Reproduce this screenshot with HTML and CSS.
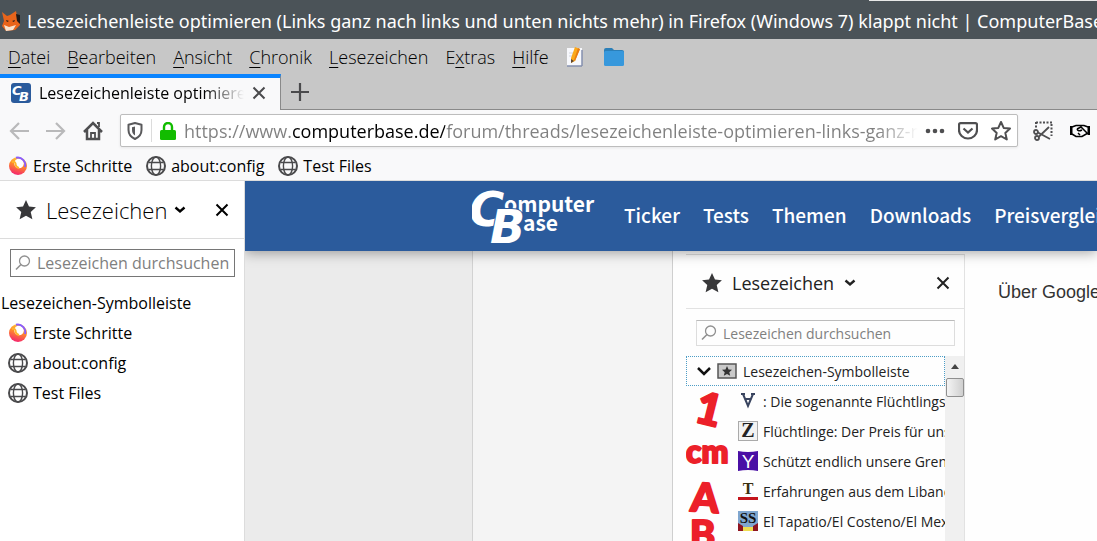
FILE: index.html
```html
<!DOCTYPE html>
<html lang="de">
<head>
    <meta charset="UTF-8">
    <meta name="viewport" content="width=device-width,initial-scale=1">
    <title>Lesezeichenleiste optimieren | ComputerBase</title>
    <link rel="stylesheet" href="styles.css">
</head>

<body>
<!-- shared icons -->
<svg class="defs" aria-hidden="true">
    <defs>
        <linearGradient id="fire" x1="0.7" y1="0" x2="0.4" y2="1">
            <stop offset="0" stop-color="#ffd23c"/>
            <stop offset="0.45" stop-color="#ff8a2a"/>
            <stop offset="1" stop-color="#f5246e"/>
        </linearGradient>
        <symbol id="globe" viewBox="0 0 20 20">
            <g fill="none" stroke="#4a4a4c" stroke-width="1.4">
                <circle cx="10" cy="10" r="9" stroke-width="2"/>
                <ellipse cx="10" cy="10" rx="4.6" ry="9"/>
                <path d="M2.5 6.5h15M2.5 13.5h15"/>
            </g>
        </symbol>
        <symbol id="firefox" viewBox="0 0 20 20">
            <circle cx="10" cy="10" r="9" fill="url(#fire)"/>
            <circle cx="11" cy="7.500" r="4.800" fill="#fff"/>
            <path d="M8 1.800A7.500 7.500 0 0 1 17 11" fill="none" stroke="#8a5cff" stroke-width="2"/>
            <path d="M4 6q3-1 3.500 1.500Q7.500 11 11 12" fill="none" stroke="#ffb52e" stroke-width="2"/>
        </symbol>
        <symbol id="star" viewBox="0 0 20 20">
            <path d="M10 1l2.700 5.900 6.300.7-4.700 4.300 1.500 6.600L10 15.200l-5.800 3.300 1.500-6.600L1 7.600l6.300-.7z" stroke-linejoin="round"/>
        </symbol>
        <symbol id="cross" viewBox="0 0 14 14">
            <path d="M1.500 1.500l11 11M12.500 1.500l-11 11" fill="none" stroke="currentColor" stroke-width="2"/>
        </symbol>
        <symbol id="chevron" viewBox="0 0 14 10">
            <path d="M2.500 2.500l4.500 4 4.500-4" fill="none" stroke="currentColor" stroke-width="2.400"/>
        </symbol>
        <symbol id="lens" viewBox="0 0 16 16">
            <circle cx="9.500" cy="6" r="5" fill="none" stroke="#909090" stroke-width="1.300"/>
            <path d="M6 9.500L1 14.500" stroke="#909090" stroke-width="1.600"/>
        </symbol>
    </defs>
</svg>

<div class="titlebar">
    <svg class="fox" viewBox="0 0 20 20">
        <path d="M1 1l5 4 3-1 6-4 1 5 3-1v10l-5 5-9 1-4-5 2-5z" fill="#e8641b"/>
        <path d="M3 14l5 2 7-2-3 5-7 1z" fill="#f6e3d0"/>
        <path d="M15 3l4 1v9l-3-3zM5 9l3 1-2 1zM11 10l3-1-1 2z" fill="#1e1a1a"/>
    </svg>
    <div class="title">Lesezeichenleiste optimieren (Links ganz nach links und unten nichts mehr) in Firefox (Windows 7) klappt nicht | ComputerBase</div>
</div>

<div class="menubar">
    <button><u>D</u>atei</button>
    <button><u>B</u>earbeiten</button>
    <button><u>A</u>nsicht</button>
    <button><u>C</u>hronik</button>
    <button><u>L</u>esezeichen</button>
    <button>E<u>x</u>tras</button>
    <button><u>H</u>ilfe</button>
    <button aria-label="Editor">
        <svg width="20" height="20" viewBox="0 0 20 20">
            <path d="M1 1h15v18H1z" fill="#f7f8fc"/>
            <path d="M1 19h15M16 3v16" stroke="#8590ae" stroke-width="1.500"/>
            <path d="M3 6h7M3 9h5" stroke="#d0d3de"/>
            <path d="M9 0l5 2-5 12-4 2v-5z" fill="#fba91a"/>
            <path d="M12 1l2 1-5 12-1-1z" fill="#e77b12"/>
            <path d="M5 12l3 2-3 2z" fill="#5a4636"/>
        </svg>
    </button>
    <button aria-label="Ordner">
        <svg width="22" height="20" viewBox="0 0 22 20">
            <path d="M1 3q0-2 2-2h6l2 2h8q2 0 2 2v4H1z" fill="#2b7fb8"/>
            <rect x="1" y="4" width="20" height="15" rx="1.500" fill="#3798dc"/>
        </svg>
    </button>
</div>

<div class="tabs">
    <div class="tab">
        <svg width="20" height="20" viewBox="0 0 20 20">
            <rect width="20" height="20" rx="3" fill="#2b5b9c"/>
            <text x="1" y="12" class="mark" font-size="13">C</text>
            <text x="8" y="18" class="mark" font-size="13">B</text>
        </svg>
        <span class="tab-label">Lesezeichenleiste optimieren</span>
        <button class="tab-close" aria-label="Tab schließen"><svg width="14" height="14"><use href="#cross"/></svg></button>
    </div>
    <button class="new-tab" aria-label="Neuer Tab">
        <svg width="18" height="18" viewBox="0 0 18 18"><path d="M9 0v18M0 9h18" stroke="#4a4a4c" stroke-width="2.200"/></svg>
    </button>
</div>

<div class="toolbar">
    <button class="tool off" aria-label="Zurück">
        <svg width="20" height="20" viewBox="0 0 20 20"><path d="M20 10H2M10 2L2 10l8 8" fill="none" stroke="currentColor" stroke-width="2.200"/></svg>
    </button>
    <button class="tool off" aria-label="Vor">
        <svg width="20" height="20" viewBox="0 0 20 20"><path d="M0 10h18M10 2l8 8-8 8" fill="none" stroke="currentColor" stroke-width="2.200"/></svg>
    </button>
    <button class="tool" aria-label="Startseite">
        <svg width="20" height="20" viewBox="0 0 20 20">
            <path d="M1 11l9-9 9 9M4 9v9h12V9" fill="none" stroke="currentColor" stroke-width="2.500"/>
            <path d="M8 18v-6h4v6M14 2h2v4" fill="none" stroke="currentColor" stroke-width="1.800"/>
        </svg>
    </button>
    <div class="urlbar">
        <svg width="16" height="18" viewBox="0 0 16 18">
            <path d="M8 1L1.500 2.800V8q0 6 6.500 9 6.500-3 6.500-9V2.800z" fill="none" stroke="#5a5a5c" stroke-width="2" stroke-linejoin="round"/>
            <path d="M8 4.500L5 5.300V8q0 3.500 3 5.500z" fill="#5a5a5c"/>
        </svg>
        <span class="sep"></span>
        <svg width="16" height="18" viewBox="0 0 16 18">
            <path d="M4 9V5a4 4 0 0 1 8 0v4" fill="none" stroke="#12bc00" stroke-width="2.400"/>
            <rect y="8" width="16" height="10" rx="1.500" fill="#12bc00"/>
        </svg>
        <input class="url" type="text" aria-label="Adresse" value="https://www.computerbase.de/forum/threads/lesezeichenleiste-optimieren-links-ganz-nach-links">
        <button class="tool" aria-label="Aktionen">
            <svg width="20" height="6" viewBox="0 0 20 6"><g fill="currentColor"><circle cx="3" cy="3" r="2.300"/><circle cx="10" cy="3" r="2.300"/><circle cx="17" cy="3" r="2.300"/></g></svg>
        </button>
        <button class="tool" aria-label="Pocket">
            <svg width="20" height="18" viewBox="0 0 20 18"><path d="M2.500 1.200h15q1.500 0 1.500 1.500V8a9 8.500 0 0 1-18 0V2.700q0-1.500 1.500-1.500zM5.500 6.500l4.500 4 4.500-4" fill="none" stroke="currentColor" stroke-width="2.200"/></svg>
        </button>
        <button class="tool" aria-label="Lesezeichen setzen">
            <svg width="20" height="20" fill="none" stroke="currentColor" stroke-width="2"><use href="#star"/></svg>
        </button>
    </div>
    <button class="tool" aria-label="Bildschirmfoto">
        <svg width="20" height="20" viewBox="0 0 20 20">
            <path d="M3 1.500h17M18.500 3v12M3 1v6" fill="none" stroke="currentColor" stroke-width="2" stroke-dasharray="2 1.500"/>
            <g fill="none" stroke="currentColor" stroke-width="1.800"><circle cx="3" cy="11" r="2"/><circle cx="4" cy="17" r="2"/><path d="M5 11.500l12 6.500M5.500 16L16 6"/></g>
        </svg>
    </button>
    <button class="tool dark" aria-label="Handschlag">
        <svg width="20" height="14" viewBox="0 0 20 14">
            <path d="M0 2h2.500v9H0zM17.500 2H20v9h-2.500z" fill="currentColor"/>
            <path d="M2 3l4-1.500h8L18 3M2 10l4 2.500h6L18 9M7 5l4-2 6 6M7 5q1 3 5 1M8 9l2 2" fill="none" stroke="currentColor" stroke-width="1.500"/>
        </svg>
    </button>
</div>

<div class="bookmarks">
    <a href="#"><svg width="20" height="20"><use href="#firefox"/></svg>Erste Schritte</a>
    <a href="#"><svg width="20" height="20"><use href="#globe"/></svg>about:config</a>
    <a href="#"><svg width="20" height="20"><use href="#globe"/></svg>Test Files</a>
</div>

<div class="content">
    <aside class="sidebar">
        <div class="side-head">
            <svg class="star" width="22" height="22"><use href="#star"/></svg>
            <button class="side-title">Lesezeichen<svg width="14" height="10"><use href="#chevron"/></svg></button>
            <button class="side-close" aria-label="Sidebar schließen"><svg width="14" height="14"><use href="#cross"/></svg></button>
        </div>
        <label class="search">
            <svg width="16" height="16"><use href="#lens"/></svg>
            <input type="text" aria-label="Lesezeichen durchsuchen" placeholder="Lesezeichen durchsuchen">
        </label>
        <div class="tree">
            <div class="folder">Lesezeichen-Symbolleiste</div>
            <a href="#"><svg width="20" height="20"><use href="#firefox"/></svg>Erste Schritte</a>
            <a href="#"><svg width="20" height="20"><use href="#globe"/></svg>about:config</a>
            <a href="#"><svg width="20" height="20"><use href="#globe"/></svg>Test Files</a>
        </div>
    </aside>

    <div class="page">
        <header class="site-head">
            <a class="logo" href="#" aria-label="ComputerBase">
                <svg width="124" height="56" viewBox="0 0 124 56">
                    <text x="32" y="24" class="word">omputer</text>
                    <text x="51" y="43" class="word">ase</text>
                    <text x="-3" y="38" class="mark edge" font-size="48">C</text>
                    <text x="18" y="55" class="mark edge" font-size="46">B</text>
                </svg>
            </a>
            <nav>
                <a href="#">Ticker</a>
                <a href="#">Tests</a>
                <a href="#">Themen</a>
                <a href="#">Downloads</a>
                <a href="#">Preisvergleich</a>
            </nav>
        </header>
        <main class="thread">
            <div class="user"></div>
            <article class="post">
                <div class="shot">
                    <div class="shot-head">
                        <svg class="star" width="22" height="22"><use href="#star"/></svg>
                        <span>Lesezeichen</span>
                        <svg width="14" height="10"><use href="#chevron"/></svg>
                        <svg class="shot-close" width="14" height="14"><use href="#cross"/></svg>
                    </div>
                    <label class="search pale">
                        <svg width="16" height="16"><use href="#lens"/></svg>
                        <input type="text" aria-label="Suche" placeholder="Lesezeichen durchsuchen">
                    </label>
                    <div class="shot-body">
                        <div class="shot-list">
                            <div class="shot-folder">
                                <svg width="14" height="10" viewBox="0 0 14 10"><path d="M1 2l6 6 6-6" fill="none" stroke="#111" stroke-width="2.500"/></svg>
                                <svg width="20" height="16" viewBox="0 0 20 16">
                                    <rect x="1" y="1" width="18" height="14" fill="#c9c9c9" stroke="#555" stroke-width="1.500"/>
                                    <path d="M10 3l1.500 3.500 3.500.3-2.700 2.400.9 3.600L10 11l-3.200 1.800.9-3.600L5 6.800l3.500-.3z" fill="#333"/>
                                </svg>
                                Lesezeichen-Symbolleiste
                            </div>
                            <div class="rows">
                                <svg class="scrawl" width="44" height="170" viewBox="0 0 44 170">
                                    <text x="10" y="38" font-size="44" transform="rotate(14 20 24)">1</text>
                                    <text x="0" y="77" font-size="32">cm</text>
                                    <text x="5" y="126" font-size="40" transform="rotate(4 18 110)">A</text>
                                    <text x="4" y="162" font-size="38">B</text>
                                </svg>
                                <ul>
                                    <li><svg width="20" height="20" viewBox="0 0 20 20"><path d="M3 3h4M13 3h4M5 3l5 12 5-12M7 8h6" fill="none" stroke="#39445f" stroke-width="2"/></svg>: Die sogenannte Flüchtlingskrise</li>
                                    <li><svg width="20" height="20" viewBox="0 0 20 20"><rect x="0.500" y="0.500" width="19" height="19" fill="#f3f3f3" stroke="#aaa"/><text x="10" y="16" class="fav" fill="#222" font-size="20">Z</text></svg>Flüchtlinge: Der Preis für unsere</li>
                                    <li><svg width="20" height="20" viewBox="0 0 20 20"><path d="M0 0q10 2 20 0v20q-10-2-20 0z" fill="#4a0fa5"/><text x="10" y="17" class="fav sans" fill="#fff" font-size="19">Y</text></svg>Schützt endlich unsere Grenzen</li>
                                    <li><svg width="20" height="20" viewBox="0 0 20 20"><text x="10" y="13" class="fav" fill="#3a3010" font-size="16">T</text><path d="M0 16h20v3H0z" fill="#c4151c"/></svg>Erfahrungen aus dem Libanon</li>
                                    <li><svg width="20" height="20" viewBox="0 0 20 20"><path d="M0 0h20v20H0z" fill="#7fa6cf"/><path d="M0 12l5 3v5H0zM20 12l-5 3v5h5z" fill="#8f1420"/><path d="M5 16h10v4H5z" fill="#eedc50"/><text x="10" y="12" class="fav" fill="#111" font-size="15">SS</text></svg>El Tapatio/El Costeno/El Mexicano</li>
                                </ul>
                            </div>
                        </div>
                        <div class="scroll">
                            <svg width="10" height="6" viewBox="0 0 10 6"><path d="M5 0l4 5H1z" fill="#444"/></svg>
                            <span class="thumb"></span>
                        </div>
                    </div>
                </div>
                <p>Über Google</p>
            </article>
        </main>
    </div>
</div>
</body>
</html>
```
FILE: styles.css
```css
* {
    box-sizing: border-box;
}

body {
    margin: 0;
    height: 100vh;
    overflow: hidden;
    display: flex;
    flex-direction: column;
    font-family: "Open Sans", "Noto Sans", sans-serif;
    font-size: 16px;
    color: #000;
    background: #f9f9fa;
}

button {
    border: 0;
    padding: 0;
    background: none;
    font: inherit;
    color: inherit;
}

a {
    color: inherit;
    text-decoration: none;
}

svg {
    flex: none;
    display: block;
}

.defs {
    position: absolute;
    width: 0;
    height: 0;
}

.mark {
    font-family: "DejaVu Sans", sans-serif;
    font-weight: 700;
    font-style: italic;
    fill: #fff;
}

/* window frame */
.titlebar {
    flex: none;
    height: 39px;
    display: flex;
    align-items: center;
    gap: 6px;
    padding: 2px 0 0 1px;
    background: linear-gradient(#e8e8e8, #e8e8e8) 100% 0 / 228px 1px no-repeat #4b5358;
    color: #fff;
    font-family: "Noto Sans", sans-serif;
    font-size: 18px;
    font-weight: 400;
    white-space: nowrap;
    overflow: hidden;
}

.fox {
    width: 20px;
    height: 20px;
}

.menubar {
    flex: none;
    height: 35px;
    display: flex;
    align-items: center;
    gap: 17px;
    padding: 0 8px;
    background: #c7c7c7;
    font-size: 18px;
    font-weight: 300;
}

.menubar u {
    text-underline-offset: 3px;
    text-decoration-thickness: 1px;
}

.tabs {
    flex: none;
    height: 36px;
    display: flex;
    background: linear-gradient(#898989, #898989) 0 100% / 100% 1px no-repeat #c7c7c7;
}

.tab {
    width: 281px;
    display: flex;
    align-items: center;
    gap: 8px;
    padding: 0 14px 2px 11px;
    background: #f9f9fa;
    border-top: 4px solid #0a84ff;
    border-right: 1px solid #898989;
}

.tab-label {
    flex: 1;
    white-space: nowrap;
    overflow: hidden;
    mask-image: linear-gradient(to left, transparent, #000 40px);
}

.tab-close {
    color: #4a4a4c;
}

.new-tab {
    padding: 0 10px;
}

.toolbar {
    flex: none;
    height: 41px;
    display: flex;
    align-items: center;
    gap: 17px;
    padding: 0 7px 0 9px;
}

.tool {
    color: #4f4f51;
}

.off {
    color: #b9b9ba;
}

.dark {
    color: #000;
}

.urlbar {
    flex: 1;
    height: 33px;
    display: flex;
    align-items: center;
    gap: 13px;
    padding: 0 6px;
    margin-right: -2px;
    background: #fff;
    border: 1px solid #bdbdbd;
    border-radius: 2px;
    box-shadow: 0 1px 3px rgba(0, 0, 0, .08);
}

.sep {
    width: 1px;
    height: 23px;
    background: #dcdcdc;
    margin: 0 -5px;
}

.url {
    flex: 1;
    min-width: 0;
    height: 31px;
    border: 0;
    padding: 0;
    margin: 0 -6px 0 -5px;
    outline: 0;
    font: inherit;
    font-size: 18px;
    color: #808080;
    /* domain is dark, the rest of the address grey */
    background: linear-gradient(to right, #808080 108px, #000 108px, #000 261px, #808080 261px);
    background-clip: text;
    -webkit-background-clip: text;
    -webkit-text-fill-color: transparent;
    mask-image: linear-gradient(to left, transparent, #000 40px);
}

.bookmarks {
    flex: none;
    height: 30px;
    display: flex;
    align-items: center;
    gap: 14px;
    padding: 0 8px;
    border-bottom: 1px solid #dcdcdc;
}

.bookmarks a {
    display: flex;
    align-items: center;
    gap: 5px;
}

/* sidebar */
.content {
    flex: 1;
    min-height: 0;
    display: flex;
}

.sidebar {
    flex: none;
    width: 245px;
    background: #fff;
    border-right: 1px solid #dcdcdc;
}

.side-head {
    height: 58px;
    display: flex;
    align-items: center;
    gap: 9px;
    padding: 0 15px;
    border-bottom: 1px solid #dcdcdc;
}

.star {
    fill: #38383a;
}

.side-title {
    display: flex;
    align-items: center;
    gap: 6px;
    font-size: 22px;
    font-weight: 300;
}

.side-close {
    margin-left: auto;
}

.search {
    display: flex;
    align-items: center;
    gap: 6px;
    height: 28px;
    margin: 10px 9px 0 10px;
    padding: 0 2px 0 4px;
    border: 1px solid #767676;
}

.search input {
    flex: 1;
    min-width: 0;
    border: 0;
    padding: 0;
    background: none;
    outline: 0;
    font: inherit;
}

.search input::placeholder {
    color: #808080;
}

.tree {
    padding-top: 11px;
}

.tree a,
.folder {
    height: 30px;
    display: flex;
    align-items: center;
    gap: 5px;
    padding-left: 8px;
}

.tree .folder {
    padding-left: 1px;
}

/* web page */
.page {
    flex: 1;
    min-width: 0;
    display: flex;
    flex-direction: column;
    background: #ebebeb;
    overflow: hidden;
}

.site-head {
    flex: none;
    height: 70px;
    display: flex;
    align-items: center;
    gap: 28px;
    padding-left: 227px;
    background: #2b5b9c;
    box-shadow: 0 2px 12px rgba(0, 0, 0, .35);
    z-index: 1;
}

.word {
    font-family: "Noto Sans CJK SC", sans-serif;
    font-size: 21px;
    font-weight: 700;
    fill: #fff;
}

.edge {
    stroke: #2b5b9c;
    stroke-width: 2px;
    paint-order: stroke;
}

.site-head nav {
    display: flex;
    gap: 23px;
    font-family: "Noto Sans CJK SC", sans-serif;
    font-size: 19px;
    font-weight: 500;
    line-height: 24px;
    padding-bottom: 2px;
    color: #fff;
}

.thread {
    flex: 1;
    min-height: 0;
    display: flex;
    margin-left: 227px;
    border-left: 1px solid #d2d2d2;
}

.user {
    flex: none;
    width: 200px;
    background: #f4f4f4;
    border-right: 1px solid #cfcfcf;
}

.post {
    flex: 1;
    display: flex;
    gap: 33px;
    padding: 3px 0 0 13px;
    background: #fefefe;
    overflow: hidden;
}

.post p {
    margin: 28px 0 0;
    font-family: "Liberation Sans", Arial, sans-serif;
    font-size: 18px;
    white-space: nowrap;
    color: #333;
}

.shot {
    flex: none;
    width: 279px;
    border-top: 1px solid #ddd;
    border-right: 1px solid #e2e2e2;
    font-size: 14px;
    color: #222;
}

.shot-head {
    height: 54px;
    display: flex;
    align-items: center;
    gap: 9px;
    padding: 2px 14px 0 15px;
    border-bottom: 1px solid #e2e2e2;
    font-size: 18px;
}

.shot-close {
    margin-left: auto;
}

.pale {
    height: 26px;
    margin: 11px 9px 10px 10px;
    border-color: #bbb #ddd #ddd;
}

.shot-body {
    display: flex;
    height: 300px;
}

.shot-list {
    flex: 1;
    min-width: 0;
}

.shot-folder {
    height: 30px;
    display: flex;
    align-items: center;
    gap: 6px;
    padding-left: 10px;
    border: 1px dotted #4d9dc6;
    white-space: nowrap;
}

.rows {
    display: flex;
    gap: 8px;
}

.rows ul {
    flex: 1;
    min-width: 0;
    margin: 0;
    padding: 0;
    list-style: none;
}

.rows li {
    height: 30px;
    display: flex;
    align-items: center;
    gap: 5px;
    white-space: nowrap;
    overflow: hidden;
}

.scrawl {
    font-family: Lato, sans-serif;
    font-weight: 900;
    fill: #ec2029;
    stroke: #ec2029;
    stroke-width: 2px;
    stroke-linejoin: round;
}

.fav {
    font-family: "Liberation Serif", serif;
    font-weight: 700;
    text-anchor: middle;
}

.fav.sans {
    font-family: "Liberation Sans", sans-serif;
    font-weight: 400;
}

.scroll {
    width: 19px;
    display: flex;
    flex-direction: column;
    align-items: center;
    gap: 8px;
    padding-top: 8px;
    background: #f0f0f0;
}

.thumb {
    width: 18px;
    height: 19px;
    border: 1px solid #8f8f8f;
    border-radius: 2px;
    background: linear-gradient(to right, #f4f4f4, #cfcfcf);
}
```
